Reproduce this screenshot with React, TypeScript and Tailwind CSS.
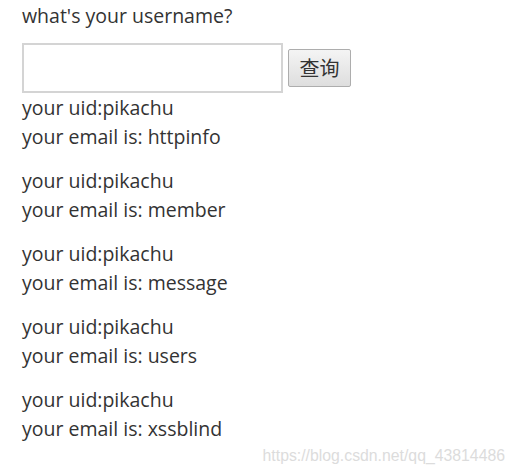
import React from 'react';

const results = ['httpinfo', 'member', 'message', 'users', 'xssblind'];

export default function App() {
    return (
        <div className="relative w-[515px] h-[475px] bg-white overflow-hidden text-[#333] text-[19.5px] leading-[29px]" style={{ fontFamily: '"Open Sans", "Noto Sans CJK SC", sans-serif' }}>
            <div className="pl-[22px] pt-px">
                <p>what's your username?</p>
                <form className="flex items-center gap-[5px] mt-[13px]" onSubmit={(e) => e.preventDefault()}>
                    <input type="text" className="w-[261px] h-[50px] border-2 border-[#d4d4d4] bg-white outline-none px-2" />
                    <button type="submit" className="w-[63px] h-[38px] border border-[#adadad] rounded-[2px] bg-gradient-to-b from-[#f4f4f4] to-[#dedede] text-[20px] leading-none text-[#333]" style={{ fontFamily: '"Noto Sans CJK SC", sans-serif' }}>
                        查询
                    </button>
                </form>
                {results.map(r => (
                    <p key={r} className="mb-[15px]">
                        your uid:pikachu<br />
                        your email is: {r}
                    </p>
                ))}
            </div>
            <span className="absolute right-[10px] bottom-[11px] text-[15.8px] leading-none text-[#dcdcdc]" style={{ fontFamily: '"Liberation Sans", Arial, sans-serif' }}>
                https://blog.csdn.net/qq_43814486
            </span>
        </div>
    );
}
